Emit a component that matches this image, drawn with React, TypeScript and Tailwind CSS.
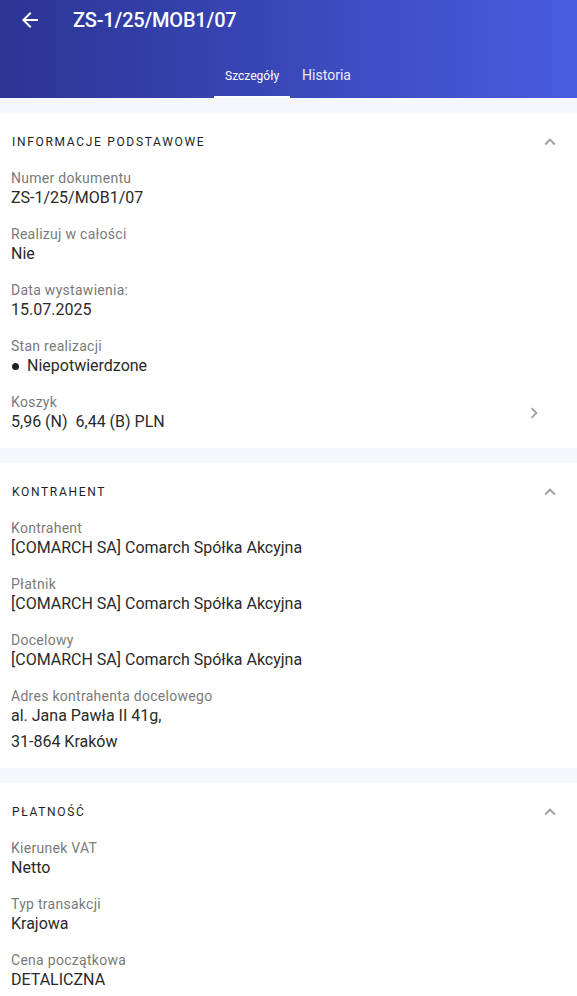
// Order details screen — header with tabs + collapsible info sections
import type { ReactNode } from 'react';

type Row = { label: string; value: ReactNode; action?: boolean };

const ChevronUp = () => (
  <svg viewBox="0 0 24 24" className="w-[22px] h-[22px]" fill="#9e9e9e">
    <path d="M7.41 15.41 12 10.83l4.59 4.58L18 14l-6-6-6 6z" />
  </svg>
);

const ChevronRight = () => (
  <svg viewBox="0 0 24 24" className="w-[22px] h-[22px]" fill="#9e9e9e">
    <path d="M10 6 8.59 7.41 13.17 12l-4.58 4.59L10 18l6-6z" />
  </svg>
);

function Section({ title, rows }: { title: string; rows: Row[] }) {
  return (
    <section className="bg-white pb-[15px]">
      {/* Section header */}
      <div className="h-14 flex items-center justify-between pl-3 pr-[16px] pt-[2px]">
        <span className="text-[12px] font-normal tracking-[0.14em] text-[#1e1e1e]">{title}</span>
        <ChevronUp />
      </div>
      <div className="flex flex-col gap-4">
        {rows.map((row) => (
          <div key={row.label} className="flex items-center justify-between pl-[11px] pr-[32px]">
            <div>
              <div className="text-[14px] leading-[18px] text-[#7a7a7a] tracking-[0.02em]">{row.label}</div>
              <div className="text-[16px] leading-[22px] text-[#2a2a2a]">{row.value}</div>
            </div>
            {row.action && <ChevronRight />}
          </div>
        ))}
      </div>
    </section>
  );
}

const Gap = () => <div className="h-[15px] bg-[#f6f7fc]" />;

export default function App() {
  const basic: Row[] = [
    { label: 'Numer dokumentu', value: 'ZS-1/25/MOB1/07' },
    { label: 'Realizuj w całości', value: 'Nie' },
    { label: 'Data wystawienia:', value: '15.07.2025' },
    {
      label: 'Stan realizacji',
      value: (
        <span className="flex items-center">
          <span className="w-[7px] h-[7px] rounded-full bg-[#212121] ml-[1px] mr-[8px]" />
          Niepotwierdzone
        </span>
      ),
    },
    { label: 'Koszyk', value: '5,96 (N)  6,44 (B) PLN', action: true },
  ];

  const contractor: Row[] = [
    { label: 'Kontrahent', value: '[COMARCH SA] Comarch Spółka Akcyjna' },
    { label: 'Płatnik', value: '[COMARCH SA] Comarch Spółka Akcyjna' },
    { label: 'Docelowy', value: '[COMARCH SA] Comarch Spółka Akcyjna' },
    {
      label: 'Adres kontrahenta docelowego',
      value: (
        <>
          <div>al. Jana Pawła II 41g,</div>
          <div className="mt-1">31-864 Kraków</div>
        </>
      ),
    },
  ];

  const payment: Row[] = [
    { label: 'Kierunek VAT', value: 'Netto' },
    { label: 'Typ transakcji', value: 'Krajowa' },
    { label: 'Cena początkowa', value: 'DETALICZNA' },
  ];

  return (
    <main className="min-h-screen bg-[#f6f7fc] font-['Roboto',sans-serif] whitespace-pre">
      {/* ── Header ─────────────────────────────── */}
      <header className="bg-gradient-to-r from-[#2b3594] to-[#4a5ce0] text-white">
        <div className="h-10 flex items-center">
          <svg viewBox="0 0 24 24" className="w-6 h-6 ml-[18px]" fill="white">
            <path d="M20 11H7.83l5.59-5.59L12 4l-8 8 8 8 1.41-1.41L7.83 13H20v-2z" />
          </svg>
          <h1 className="ml-[31px] text-[20px] font-medium tracking-[-0.01em]">ZS-1/25/MOB1/07</h1>
        </div>
        <nav className="mt-[10px] h-12 flex justify-center">
          <div className="px-[11px] pt-[5px] flex items-center text-[12px] border-b-2 border-white">Szczegóły</div>
          <div className="px-3 pt-[5px] flex items-center text-[14px] text-white/90 border-b-2 border-transparent">Historia</div>
        </nav>
      </header>

      <Gap />
      <Section title="INFORMACJE PODSTAWOWE" rows={basic} />
      <Gap />
      <Section title="KONTRAHENT" rows={contractor} />
      <Gap />
      <Section title="PŁATNOŚĆ" rows={payment} />
    </main>
  );
}
